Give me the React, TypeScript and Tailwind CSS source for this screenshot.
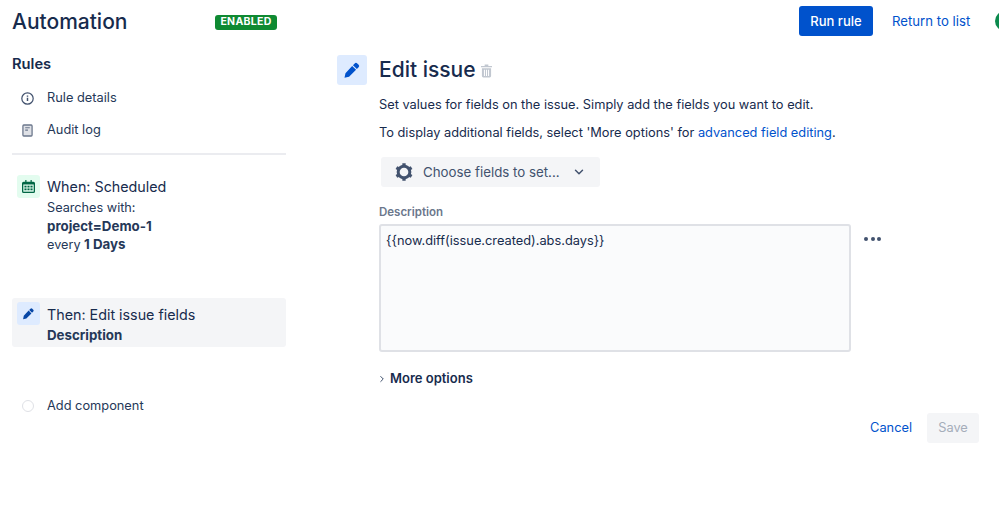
import { ChevronDown, ChevronRight } from "lucide-react"

function PencilIcon({ className }: { className?: string }) {
  return (
    <svg viewBox="0 0 24 24" className={className} fill="currentColor">
      <path d="M15.6 3.2a2.4 2.4 0 0 1 3.4 0l1.8 1.8a2.4 2.4 0 0 1 0 3.4l-2.3 2.3-5.2-5.2 2.3-2.3Z" />
      <path d="M12.2 6.6l5.2 5.2-9.3 9.3-6.1 1.3 1.3-6.1 8.9-9.7Z" />
    </svg>
  )
}

function CalendarIcon() {
  return (
    <svg viewBox="0 0 16 16" className="h-[13px] w-[13px] text-[#006644]" fill="currentColor">
      <path d="M4 0h1.5v2h5V0H12v2h2a2 2 0 0 1 2 2v10a2 2 0 0 1-2 2H2a2 2 0 0 1-2-2V4a2 2 0 0 1 2-2h2V0Z" />
      <rect x="1.6" y="5.5" width="12.8" height="8.9" fill="#e3fcef" />
      <rect x="3" y="7" width="2.6" height="2.2" />
      <rect x="6.7" y="7" width="2.6" height="2.2" />
      <rect x="10.4" y="7" width="2.6" height="2.2" />
      <rect x="3" y="10.4" width="2.6" height="2.2" />
      <rect x="6.7" y="10.4" width="2.6" height="2.2" />
      <rect x="10.4" y="10.4" width="2.6" height="2.2" />
    </svg>
  )
}

function GearIcon() {
  return (
    <svg viewBox="0 0 24 24" className="h-[20px] w-[20px] text-[#42526e]" fill="none" stroke="currentColor">
      <circle cx="12" cy="12" r="7" strokeWidth="3.6" />
      <path d="M12 1.5v4M12 18.5v4M2.9 6.75l3.5 2M17.6 15.25l3.5 2M2.9 17.25l3.5-2M17.6 8.75l3.5-2" strokeWidth="4" />
    </svg>
  )
}

function TrashIcon() {
  return (
    <svg viewBox="0 0 12 14" className="h-[14px] w-[11px] text-[#c1c7d0]" fill="currentColor">
      <path d="M4 0h4v1.5h4V3H0V1.5h4V0Z" />
      <path d="M1 4h10v8.5a1.5 1.5 0 0 1-1.5 1.5h-7A1.5 1.5 0 0 1 1 12.5V4Zm2.2 1.5v7h1.1v-7H3.2Zm2.25 0v7h1.1v-7h-1.1Zm2.25 0v7h1.1v-7H7.7Z" fillRule="evenodd" />
    </svg>
  )
}

export default function App() {
  return (
    <div className="h-[506px] w-[999px] overflow-hidden bg-white font-['Inter',sans-serif] text-[12.8px] text-[#172b4d]">
      <header className="flex h-[44px] items-center pl-3">
        <h1 className="w-[203px] shrink-0 text-[21px] font-medium leading-7">Automation</h1>
        <span className="flex h-[15px] w-[62px] shrink-0 items-center justify-center rounded-[3px] bg-[#0f8a32] text-[10.5px] font-bold leading-none tracking-[0.3px] text-white">
          ENABLED
        </span>
        <button className="ml-[522px] mt-[-2px] h-[30px] w-[74px] shrink-0 rounded-[3px] bg-[#0052cc] pt-[1px] text-[13px] font-medium text-white">
          Run rule
        </button>
        <a className="ml-[19px] mt-[-1px] w-[78px] shrink-0 whitespace-nowrap text-[13.2px] text-[#0052cc]">Return to list</a>
        <span className="ml-[25px] mt-[-3px] h-[20px] w-[20px] shrink-0 rounded-full bg-[#0b8a4d]" />
      </header>

      <div className="flex">
        <aside className="ml-3 w-[274px] shrink-0">
          <h2 className="mt-[10px] text-[14.7px] font-semibold leading-5">Rules</h2>
          <ul className="mt-[14px] flex flex-col gap-[12px] text-[#253858]">
            <li className="flex h-5 items-center">
              <svg viewBox="0 0 16 16" className="ml-[9px] h-[13px] w-[13px] text-[#42526e]" fill="none" stroke="currentColor" strokeWidth="1.5">
                <circle cx="8" cy="8" r="7" />
                <path d="M8 7.2v4M8 4.2v1.6" strokeWidth="1.8" />
              </svg>
              <span className="ml-[13px]">Rule details</span>
            </li>
            <li className="flex h-5 items-center">
              <svg viewBox="0 0 12 14" className="ml-[10px] h-[15px] w-[11px] text-[#6b778c]" fill="none" stroke="currentColor" strokeWidth="1.4">
                <rect x="1" y="1" width="10" height="12" rx="1" fill="#dfe1e6" />
                <path d="M3.5 4h5M3.5 6.5h3" strokeWidth="1.3" />
              </svg>
              <span className="ml-[14px]">Audit log</span>
            </li>
          </ul>
          <div className="mt-[13px] h-[2px] bg-[#ebecf0]" />

          <div className="mt-5 flex pl-[5px]">
            <span className="flex h-[23px] w-[23px] shrink-0 items-center justify-center rounded-[3px] bg-[#e3fcef]">
              <CalendarIcon />
            </span>
            <div className="ml-[7px]">
              <p className="text-[14.3px] leading-6">When: Scheduled</p>
              <div className="text-[12.7px] leading-[18px] text-[#253858]">
                <p>Searches with:</p>
                <p className="text-[13.3px] font-bold">project=Demo-1</p>
                <p>
                  every <b className="text-[13.3px]">1 Days</b>
                </p>
              </div>
            </div>
          </div>

          <div className="mt-[44px] flex h-[49px] rounded-[3px] bg-[#f4f5f7] pl-[5px] pt-1">
            <span className="flex h-[23px] w-[23px] shrink-0 items-center justify-center rounded-[3px] bg-[#deebff]">
              <PencilIcon className="h-[13px] w-[13px] text-[#0747a6]" />
            </span>
            <div className="ml-[7px]">
              <p className="mt-[1px] text-[14.3px] leading-6">Then: Edit issue fields</p>
              <p className="mt-[-1px] text-[13.3px] font-bold leading-[18px] text-[#253858]">Description</p>
            </div>
          </div>

          <div className="mt-[49px] flex h-5 items-center pl-[10px]">
            <span className="h-[12px] w-[12px] rounded-full border border-[#dfe1e6]" />
            <span className="ml-[13px] text-[#253858]">Add component</span>
          </div>
        </aside>

        <main className="ml-[51px] min-w-0 flex-1">
          <div className="mt-[11px] flex h-[30px] items-center">
            <span className="flex h-[30px] w-[30px] items-center justify-center rounded-[3px] bg-[#deebff]">
              <PencilIcon className="h-[18px] w-[18px] text-[#0052cc]" />
            </span>
            <h2 className="ml-3 text-[21px] font-medium leading-7">Edit issue</h2>
            <span className="ml-[5px] mt-[2px] flex"><TrashIcon /></span>
          </div>

          <div className="ml-[42px]">
            <p className="mt-[10px] leading-5">
              Set values for fields on the issue. Simply add the fields you want to edit.
            </p>
            <p className="mt-2 leading-5">
              To display additional fields, select 'More options' for{" "}
              <a className="text-[#0052cc]">advanced field editing</a>.
            </p>

            <button className="ml-[2px] mt-[14px] flex h-[30px] w-[219px] items-center rounded-[3px] bg-[#f4f5f7] pl-[13px] text-[#42526e]">
              <GearIcon />
              <span className="ml-[9px] pt-[1px] text-[13.3px]">Choose fields to set...</span>
              <ChevronDown className="ml-[12px] h-[14px] w-[14px]" strokeWidth={2.5} />
            </button>

            <label className="mt-[17px] block text-[11.5px] font-semibold leading-4 text-[#6b778c]">Description</label>
            <div className="mt-[4px] flex items-start">
              <div className="h-[128px] w-[472px] rounded-[3px] border-2 border-[#dfe1e6] bg-[#fafbfc] px-[5px] py-[5px] leading-5">
                {"{{now.diff(issue.created).abs.days}}"}
              </div>
              <div className="ml-[13px] mt-[13px] flex gap-[2.5px]">
                <span className="h-[4px] w-[4px] rounded-full bg-[#42526e]" />
                <span className="h-[4px] w-[4px] rounded-full bg-[#42526e]" />
                <span className="h-[4px] w-[4px] rounded-full bg-[#42526e]" />
              </div>
            </div>

            <div className="mt-[17px] flex h-5 items-center">
              <ChevronRight className="ml-[-2px] h-[10px] w-[10px] text-[#172b4d]" strokeWidth={2} />
              <span className="ml-[3px] text-[13px] font-semibold">More options</span>
            </div>

            <div className="mt-[24px] flex w-[600px] items-center justify-end">
              <a className="text-[12.8px] text-[#0052cc]">Cancel</a>
              <button className="ml-[15px] h-[30px] w-[52px] rounded-[3px] bg-[#f4f5f7] text-[12.8px] text-[#a5adba]">Save</button>
            </div>
          </div>
        </main>
      </div>
    </div>
  )
}
